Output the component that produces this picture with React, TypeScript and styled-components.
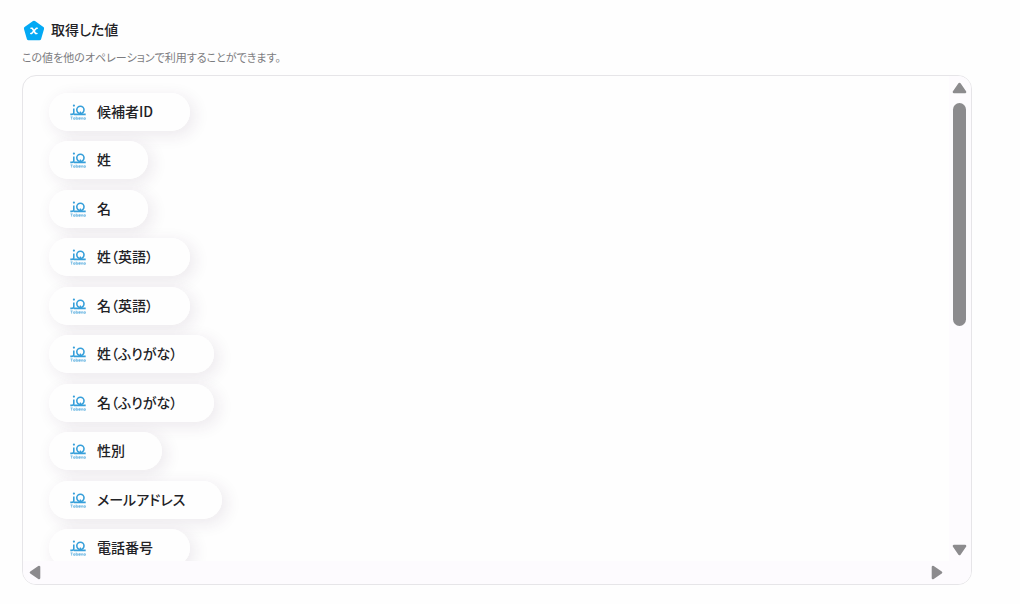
import React from "react";
import styled, { createGlobalStyle } from "styled-components";

const GlobalStyle = createGlobalStyle`
  * { box-sizing: border-box; }
  body {
    margin: 0;
    background: #fefefe;
    color: #222226;
    font-family: "Noto Sans CJK JP", "Noto Sans", sans-serif;
    font-feature-settings: "palt";
  }
`;

const Page = styled.main`
  display: flex;
  flex-direction: column;
  height: 100vh;
  min-height: 300px;
  padding: 18px 48px 19px 22px;
`;

const Heading = styled.header`
  display: flex;
  align-items: flex-start;
  gap: 5px;
  height: 24px;
`;

const Title = styled.h1`
  margin: 0;
  font-size: 14px;
  line-height: 22px;
  font-weight: 500;
`;

const Description = styled.p`
  margin: 7px 0 9px;
  font-size: 11px;
  line-height: 17px;
  color: #7c7c80;
`;

const Panel = styled.section`
  flex: 1;
  min-height: 0;
  display: grid;
  grid-template-columns: minmax(0, 1fr) 22px;
  grid-template-rows: minmax(0, 1fr) 23px;
  overflow: hidden;
  border: 1px solid #e6e5e8;
  border-radius: 14px;
  background: #fefefe;
`;

const Viewport = styled.div`
  overflow: hidden;
  padding: 17px 26px 0;
`;

const List = styled.ul`
  position: relative;
  z-index: 0;
  display: flex;
  flex-direction: column;
  align-items: flex-start;
  justify-content: space-between;
  height: 474px;
  margin: 0;
  padding: 0;
  list-style: none;
`;

const Item = styled.li`
  display: flex;
`;

const Pill = styled.button`
  position: relative;
  display: flex;
  align-items: center;
  gap: 11px;
  height: 38px;
  padding: 0 37px 0 21px;
  border: 0;
  border-radius: 19px;
  background: #fefefe;
  color: inherit;
  font: inherit;
  font-feature-settings: inherit;
  font-size: 14px;
  line-height: 22px;
  font-weight: 500;
  white-space: nowrap;

  /* Keeps each shadow behind the neighbouring pills. */
  &::before {
    content: "";
    position: absolute;
    inset: 0;
    z-index: -1;
    border-radius: inherit;
    box-shadow: 4px 4px 16px 1px rgba(70, 35, 80, 0.09);
  }
`;

const PillText = styled.span`
  padding-bottom: 2px;
`;

const Track = styled.div<{ $vertical?: boolean }>`
  display: flex;
  flex-direction: ${(p) => (p.$vertical ? "column" : "row")};
  align-items: center;
  justify-content: space-between;
  padding: ${(p) => (p.$vertical ? "6px 2px 5px 0" : "0 6px 0 6px")};
  background: #fdfbfe;
`;

const ArrowButton = styled.button`
  display: flex;
  padding: 0;
  border: 0;
  background: none;
`;

const Thumb = styled.div`
  width: 13px;
  height: 47%;
  margin: 9px 0 auto;
  border-radius: 7px;
  background: #8c8b8e;
`;

const Corner = styled.div`
  background: #fdfbfe;
`;

const PentagonIcon = () => (
  <svg width="24" height="24" viewBox="0 0 24 24" aria-hidden="true">
    <path
      d="M12 4.4 20.4 10.5 17.5 20.6H6.5L3.6 10.5Z"
      fill="#03a9f4"
      stroke="#03a9f4"
      strokeWidth="3.4"
      strokeLinejoin="round"
    />
    <path
      d="M9 10.3h1.2l3.4 5.2h1.3M15.2 10.3h-.8l-4.8 5.2h-.8"
      fill="none"
      stroke="#fff"
      strokeWidth="1.6"
      strokeLinecap="round"
      strokeLinejoin="round"
    />
  </svg>
);

const BrandIcon = () => (
  <svg width="16" height="16" viewBox="0 0 16 16" fill="none" aria-hidden="true">
    <circle cx="3.9" cy="1.6" r="1.1" fill="#369fda" />
    <path
      d="M.3 10.4h1.8c1.1 0 1.7-.6 1.7-1.6V4.4M3.8 10.4h11.9"
      stroke="#369fda"
      strokeWidth="1.6"
    />
    <circle cx="10.4" cy="5.8" r="3.6" stroke="#369fda" strokeWidth="1.6" />
    <path d="M10.4 7.6v2.6" stroke="#369fda" strokeWidth="1.2" />
    <path
      d="M.5 12.9h2.2M1.6 13v2.6M3.6 15.3v-1.5h1.5v1.5H3.6M6.2 12.6v2.7h1.5v-1.5H6.2M8.8 14.5h1.6v-.8H8.8v1.6h1.6M11.4 15.6v-1.8h1.4v1.8M13.9 13.8h1.5v1.5h-1.5z"
      stroke="#69b6e2"
      strokeWidth=".8"
    />
  </svg>
);

const ARROWS = {
  up: { w: 15, h: 12, d: "M7.5 2 13 10H2Z" },
  down: { w: 15, h: 12, d: "M2 2h11L7.5 10Z" },
  left: { w: 12, h: 15, d: "M2 7.5 10 2v11Z" },
  right: { w: 12, h: 15, d: "M2 2 10 7.5 2 13Z" },
};

const Arrow = ({ to, label }: { to: keyof typeof ARROWS; label: string }) => {
  const { w, h, d } = ARROWS[to];
  return (
    <ArrowButton type="button" aria-label={label}>
      <svg width={w} height={h} viewBox={`0 0 ${w} ${h}`}>
        <path d={d} fill="#8c8b8e" stroke="#8c8b8e" strokeWidth="2.6" strokeLinejoin="round" />
      </svg>
    </ArrowButton>
  );
};

const VALUES = [
  "候補者ID",
  "姓",
  "名",
  "姓（英語）",
  "名（英語）",
  "姓（ふりがな）",
  "名（ふりがな）",
  "性別",
  "メールアドレス",
  "電話番号",
];

export default function App() {
  return (
    <>
      <GlobalStyle />
      <Page lang="ja">
        <Heading>
          <PentagonIcon />
          <Title>取得した値</Title>
        </Heading>
        <Description>この値を他のオペレーションで利用することができます。</Description>
        <Panel>
          <Viewport>
            <List>
              {VALUES.map((value) => (
                <Item key={value}>
                  <Pill type="button">
                    <BrandIcon />
                    <PillText>{value}</PillText>
                  </Pill>
                </Item>
              ))}
            </List>
          </Viewport>
          <Track $vertical>
            <Arrow to="up" label="上へスクロール" />
            <Thumb />
            <Arrow to="down" label="下へスクロール" />
          </Track>
          <Track>
            <Arrow to="left" label="左へスクロール" />
            <Arrow to="right" label="右へスクロール" />
          </Track>
          <Corner />
        </Panel>
      </Page>
    </>
  );
}
